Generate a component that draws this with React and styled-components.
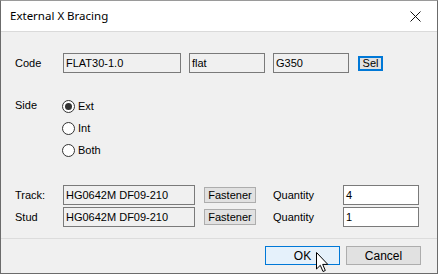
import React from "react";
import styled, { createGlobalStyle } from "styled-components";

const GlobalStyle = createGlobalStyle`
  html, body {
    margin: 0;
    padding: 0;
    background: #f0f0f0;
  }
  * {
    box-sizing: border-box;
  }
`;

const Window = styled.div`
  position: relative;
  width: 438px;
  height: 274px;
  display: flex;
  flex-direction: column;
  background: #f0f0f0;
  border: 1px solid #6b6b6b;
  border-top-color: #9a9a9a;
  font-family: "Liberation Sans", Arial, sans-serif;
  font-size: 11px;
  color: #000;
  overflow: hidden;
`;

const TitleBar = styled.div`
  height: 31px;
  flex: none;
  display: flex;
  align-items: center;
  justify-content: space-between;
  background: #fff;
  border-bottom: 1px solid #dadada;
  padding-left: 9px;
`;

const Title = styled.span`
  font-family: "Noto Sans", sans-serif;
  font-size: 11.5px;
  color: #000;
  padding-bottom: 1px;
`;

const CloseButton = styled.div`
  width: 46px;
  height: 30px;
  display: flex;
  align-items: center;
  justify-content: center;
  margin-right: -1px;
`;

const Body = styled.div`
  flex: 1;
  display: flex;
  flex-direction: column;
  padding: 21px 0 0 14px;
`;

const Row = styled.div`
  display: flex;
  align-items: center;
  height: 20px;
  margin-top: ${(p) => p.$top || 0}px;
`;

const Label = styled.div`
  width: ${(p) => p.$w || 48}px;
  flex: none;
`;

const Field = styled.div`
  width: ${(p) => p.$w}px;
  height: 20px;
  flex: none;
  display: flex;
  align-items: center;
  padding-left: 2px;
  border: 1px solid #7a7a7a;
  background: ${(p) => (p.$editable ? "#fff" : "#f0f0f0")};
  margin-right: ${(p) => p.$gap || 0}px;
  white-space: nowrap;
  overflow: hidden;
`;

const SmallButton = styled.div`
  width: ${(p) => p.$w}px;
  height: ${(p) => p.$h || 16}px;
  flex: none;
  display: flex;
  align-items: center;
  justify-content: center;
  background: #e1e1e1;
  border: ${(p) => (p.$focused ? "2px solid #0078d7" : "1px solid #adadad")};
  margin-right: ${(p) => p.$gap || 0}px;
`;

const SideGroup = styled.div`
  display: flex;
  margin-top: 22px;
`;

const SideLabel = styled(Label)`
  height: 22px;
  display: flex;
  align-items: center;
  padding-bottom: 3px;
`;

const RadioList = styled.div`
  display: flex;
  flex-direction: column;
`;

const RadioRow = styled.div`
  height: 22px;
  display: flex;
  align-items: center;
  gap: 3px;
  margin-left: -1px;
`;

const RadioCircle = styled.span`
  width: 13px;
  height: 13px;
  border-radius: 50%;
  border: 1px solid #333;
  background: #fff;
  display: flex;
  align-items: center;
  justify-content: center;

  &::after {
    content: "";
    width: 7px;
    height: 7px;
    border-radius: 50%;
    background: ${(p) => (p.$checked ? "#333" : "transparent")};
  }
`;

const Parts = styled.div`
  display: flex;
  flex-direction: column;
  gap: 2px;
  margin-top: 24px;
`;

const Footer = styled.div`
  height: 35px;
  flex: none;
  display: flex;
  justify-content: flex-end;
  align-items: flex-start;
  gap: 6px;
  padding: 7px 16px 0 0;
  border-top: 1px solid #dcdcdc;
`;

const DialogButton = styled.div`
  width: 75px;
  height: 19px;
  display: flex;
  align-items: center;
  justify-content: center;
  font-size: 12px;
  background: ${(p) => (p.$default ? "#e5f1fb" : "#e1e1e1")};
  border: 1px solid ${(p) => (p.$default ? "#0078d7" : "#adadad")};
`;

const Cursor = styled.svg`
  position: absolute;
  left: 315px;
  top: 251px;
`;

const Radio = ({ checked, children }) => (
  <RadioRow>
    <RadioCircle $checked={checked} />
    <span>{children}</span>
  </RadioRow>
);

const PartRow = ({ label, code, qty }) => (
  <Row>
    <Label>{label}</Label>
    <Field $w={132} $gap={9}>{code}</Field>
    <SmallButton $w={52} $gap={17}>Fastener</SmallButton>
    <Label $w={70}>Quantity</Label>
    <Field $w={76} $editable>{qty}</Field>
  </Row>
);

export default function App() {
  return (
    <>
      <GlobalStyle />
      <Window>
        <TitleBar>
          <Title>External X Bracing</Title>
          <CloseButton>
            <svg width="11" height="11" viewBox="0 0 11 11">
              <path d="M0.5 0.5 L10.5 10.5 M10.5 0.5 L0.5 10.5" stroke="#111" strokeWidth="1" fill="none" />
            </svg>
          </CloseButton>
        </TitleBar>
        <Body>
          <Row>
            <Label>Code</Label>
            <Field $w={118} $gap={8}>FLAT30-1.0</Field>
            <Field $w={76} $gap={8}>flat</Field>
            <Field $w={76} $gap={9}>G350</Field>
            <SmallButton $w={25} $h={15} $focused>Sel</SmallButton>
          </Row>
          <SideGroup>
            <SideLabel>Side</SideLabel>
            <RadioList>
              <Radio checked>Ext</Radio>
              <Radio>Int</Radio>
              <Radio>Both</Radio>
            </RadioList>
          </SideGroup>
          <Parts>
            <PartRow label="Track:" code="HG0642M DF09-210" qty="4" />
            <PartRow label="Stud" code="HG0642M DF09-210" qty="1" />
          </Parts>
        </Body>
        <Footer>
          <DialogButton $default>OK</DialogButton>
          <DialogButton>Cancel</DialogButton>
        </Footer>
        <Cursor width="13" height="21" viewBox="0 0 13 21">
          <path
            d="M0.5 0.5 L0.5 17 L4.3 13.3 L7 19.5 L9.3 18.5 L6.7 12.4 L11.8 12.4 Z"
            fill="#fff"
            stroke="#000"
            strokeWidth="1"
            strokeLinejoin="miter"
          />
        </Cursor>
      </Window>
    </>
  );
}
